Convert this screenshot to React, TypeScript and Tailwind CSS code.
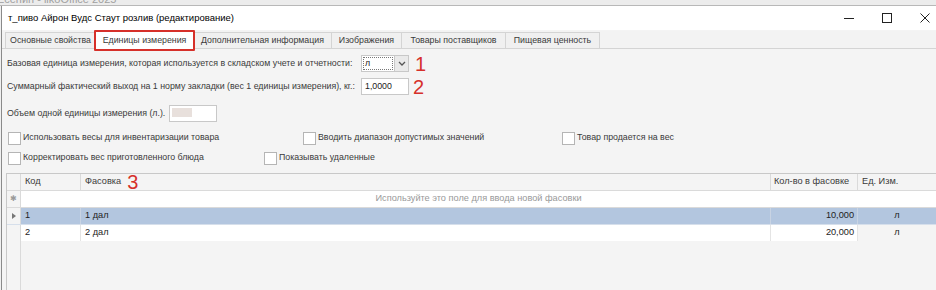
import React from "react";

const Checkbox = ({ label }: { label: string }) => (
  <div className="flex items-center gap-[2px] whitespace-nowrap">
    <div className="w-[13px] h-[13px] bg-white border border-[#b5b5b5]" />
    <span>{label}</span>
  </div>
);

const RED = { fontFamily: "'Liberation Sans', sans-serif" };

export default function App() {
  const tabs: [string, string][] = [
    ["Основные свойства", "w-[91px]"],
    ["Единицы измерения", "w-[99px]"],
    ["Дополнительная информация", "w-[139px]"],
    ["Изображения", "w-[71px]"],
    ["Товары поставщиков", "w-[105px]"],
    ["Пищевая ценность", "w-[95px]"],
  ];
  return (
    <div
      className="w-[936px] h-[290px] overflow-hidden bg-[#f0f0f0] flex flex-col text-[8.8px] text-[#3a3a3a] whitespace-nowrap"
      style={{ fontFamily: "'Liberation Sans', Arial, sans-serif" }}
    >
      {/* background strip */}
      <div className="h-[6px] overflow-hidden bg-[#ececec] border-b border-[#b8b8b8]">
        <div className="-mt-[7px] ml-[-3px] text-[11px] text-[#a0a0a0] leading-[12px]">
          Есенин - iikoOffice 2025
        </div>
      </div>
      {/* window */}
      <div className="flex-1 flex flex-col border-l border-[#8a8a8a] ml-[1px] bg-[#f4f4f4]">
        {/* title bar */}
        <div className="h-[24px] bg-white flex items-center justify-between">
          <span className="pl-[6px] text-[9.5px] text-black">
            т_пиво Айрон Вудс Стаут розлив (редактирование)
          </span>
          <div className="flex items-center h-full gap-[28px] pr-[6px]">
            <svg width="10" height="10" viewBox="0 0 10 10"><path d="M0 5.5h10" stroke="#222" strokeWidth="1" /></svg>
            <svg width="10" height="10" viewBox="0 0 10 10"><rect x="0.5" y="0.5" width="9" height="9" fill="none" stroke="#222" strokeWidth="1" /></svg>
            <svg width="10" height="10" viewBox="0 0 10 10"><path d="M0.5 0.5l9 9M9.5 0.5l-9 9" stroke="#222" strokeWidth="1" /></svg>
          </div>
        </div>
        {/* tabs */}
        <div className="h-[18px] mt-[1px] flex items-end pl-[4px] border-b border-[#d4d4d4] bg-[#f3f3f3]">
          {tabs.map(([t, w], i) =>
            i === 1 ? (
              <div key={t} className={`relative h-[18px] ${w} flex items-center justify-center bg-white border-t border-x border-[#d4d4d4] -mb-[1px] ml-[-1px]`}>
                <span>{t}</span>
                <div className="absolute -left-[2px] -right-[2px] -top-[2px] -bottom-[2px] border-2 border-[#d6302a] rounded-[1px]" />
              </div>
            ) : (
              <div key={t} className={`h-[16px] ${w} flex items-center justify-center bg-[#f0f0f0] border-t border-x border-[#d4d4d4] ml-[-1px]`}>
                {t}
              </div>
            )
          )}
        </div>
        {/* content */}
        <div className="flex-1 flex flex-col pl-[5px] pt-[6px]">
          <div className="flex items-center h-[17px]">
            <span className="w-[350px]">Базовая единица измерения, которая используется в складском учете и отчетности:</span>
            <div className="ml-[4px] w-[48px] h-[17px] bg-white border border-[#c8c8c8] flex">
              <div className="flex-1 m-[1px] border border-dotted border-[#777] flex items-center pl-[1px] text-[#222]">л</div>
              <div className="w-[14px] bg-[#eaeaea] border-l border-[#c8c8c8] flex items-center justify-center">
                <svg width="8" height="5" viewBox="0 0 8 5"><path d="M1 1l3 3 3-3" stroke="#555" strokeWidth="1.3" fill="none" /></svg>
              </div>
            </div>
            <span className="ml-[6px] text-[#d6302a] text-[20px] leading-none" style={RED}>1</span>
          </div>
          <div className="flex items-center h-[17px] mt-[6px]">
            <span className="w-[350px]">Суммарный фактический выход на 1 норму закладки (вес 1 единицы измерения), кг.:</span>
            <div className="ml-[4px] w-[48px] h-[17px] bg-white border border-[#c8c8c8] flex items-center pl-[3px] text-[#222]">1,0000</div>
            <span className="ml-[4px] text-[#d6302a] text-[20px] leading-none" style={RED}>2</span>
          </div>
          <div className="flex items-center h-[17px] mt-[10px]">
            <span className="w-[162px]">Объем одной единицы измерения (л.).</span>
            <div className="w-[48px] h-[17px] bg-white border border-[#c8c8c8] flex items-center pl-[2px]">
              <div className="w-[20px] h-[9px] bg-[#e8e0dc] mt-[-2px]" />
            </div>
          </div>
          <div className="flex items-center h-[14px] mt-[9px] pl-[1px]">
            <div className="w-[295px]"><Checkbox label="Использовать весы для инвентаризации товара" /></div>
            <div className="w-[259px]"><Checkbox label="Вводить диапазон допустимых значений" /></div>
            <Checkbox label="Товар продается на вес" />
          </div>
          <div className="flex items-center h-[14px] mt-[6px] pl-[1px]">
            <div className="w-[256px]"><Checkbox label="Корректировать вес приготовленного блюда" /></div>
            <Checkbox label="Показывать удаленные" />
          </div>
          {/* grid */}
          <div className="flex-1 mt-[8px] ml-[-1px] border-l border-t border-[#c8c8c8] bg-[#f4f4f4] flex flex-col text-[9.2px]">
            <div className="flex h-[17px] bg-[#f4f4f4] border-b border-[#dadada]">
              <div className="w-[14px] border-r border-[#dadada]" />
              <div className="w-[60px] border-r border-[#dadada] pl-[4px] flex items-center">Код</div>
              <div className="w-[690px] border-r border-[#dadada] pl-[4px] flex items-center">
                Фасовка
                <span className="ml-[6px] text-[#d6302a] text-[20px] leading-none" style={RED}>3</span>
              </div>
              <div className="w-[87px] border-r border-[#dadada] pl-[3px] flex items-center">Кол-во в фасовке</div>
              <div className="flex-1 pl-[4px] flex items-center">Ед. Изм.</div>
            </div>
            <div className="flex h-[17px] bg-white border-b border-[#dadada]">
              <div className="w-[14px] border-r border-[#dadada] bg-[#f4f4f4] flex items-center justify-center text-[#9a9a9a] text-[8px]">✱</div>
              <div className="flex-1 flex items-center justify-center text-[#999]">Используйте это поле для ввода новой фасовки</div>
            </div>
            <div className="flex h-[17px] bg-[#b3c6df] text-[#222] border-b border-[#d6dfeb]">
              <div className="w-[14px] border-r border-[#dadada] bg-[#f4f4f4] flex items-center justify-center">
                <svg width="4" height="6" viewBox="0 0 4 6"><path d="M0 0l4 3-4 3z" fill="#777" /></svg>
              </div>
              <div className="w-[60px] border-r border-[#c8d3e3] pl-[4px] flex items-center">1</div>
              <div className="w-[690px] border-r border-[#c8d3e3] pl-[4px] flex items-center">1 дал</div>
              <div className="w-[87px] border-r border-[#c8d3e3] pr-[3px] flex items-center justify-end">10,000</div>
              <div className="flex-1 flex items-center justify-center">л</div>
            </div>
            <div className="flex h-[16px] text-[#222]">
              <div className="w-[14px] border-r border-[#dadada] bg-[#f4f4f4]" />
              <div className="w-[60px] border-r border-[#e4e4e4] pl-[4px] flex items-center bg-white">2</div>
              <div className="w-[690px] border-r border-[#e4e4e4] pl-[4px] flex items-center bg-white">2 дал</div>
              <div className="w-[87px] border-r border-[#e4e4e4] pr-[3px] flex items-center justify-end bg-white">20,000</div>
              <div className="flex-1 flex items-center justify-center bg-[#f4f4f4]">л</div>
            </div>
            <div className="flex-1 flex">
              <div className="w-[14px] border-r border-[#dadada]" />
            </div>
          </div>
        </div>
      </div>
    </div>
  );
}
